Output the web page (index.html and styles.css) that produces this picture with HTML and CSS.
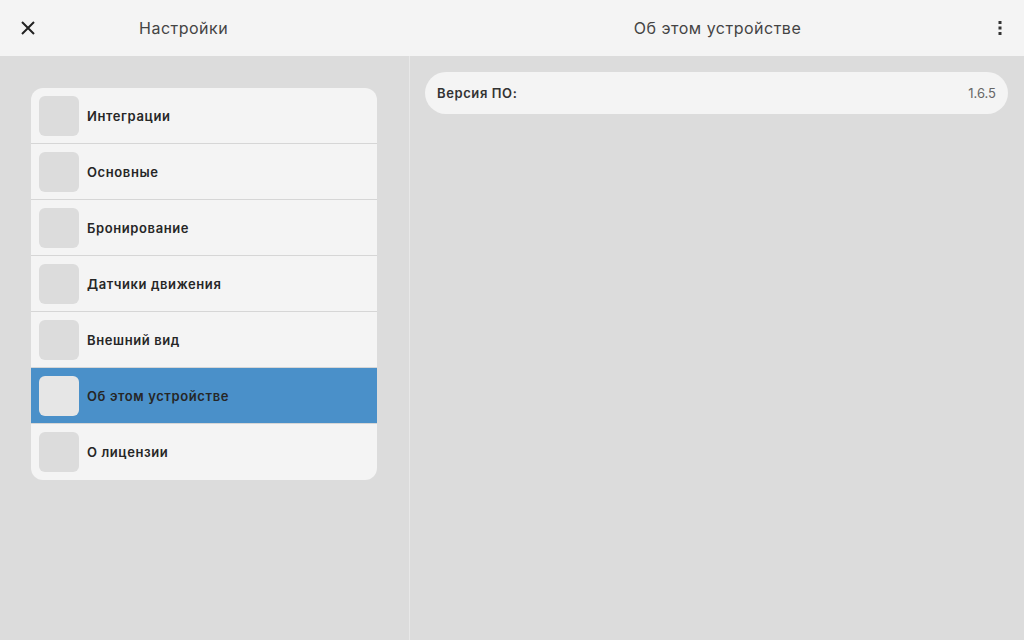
FILE: index.html
```html
<!DOCTYPE html>
<html lang="ru">
<head>
<meta charset="utf-8">
<link rel="stylesheet" href="styles.css">
</head>
<body>
<div class="app">
  <header class="topbar">
    <div class="top-left">
      <button class="icon-btn close" aria-label="close">
        <svg width="16" height="16" viewBox="0 0 16 16"><path d="M2 2L14 14M14 2L2 14" stroke="#222" stroke-width="2" fill="none"/></svg>
      </button>
      <div class="title left-title">Настройки</div>
    </div>
    <div class="top-right">
      <div class="title right-title">Об этом устройстве</div>
      <button class="icon-btn kebab" aria-label="menu">
        <svg width="4" height="16" viewBox="0 0 4 16"><rect x="0.5" y="1" width="3" height="3" fill="#333"/><rect x="0.5" y="6.5" width="3" height="3" fill="#333"/><rect x="0.5" y="12" width="3" height="3" fill="#333"/></svg>
      </button>
    </div>
  </header>
  <main class="content">
    <aside class="sidebar">
      <ul class="menu">
        <li class="item"><span class="ico"></span><span class="label">Интеграции</span></li>
        <li class="item"><span class="ico"></span><span class="label">Основные</span></li>
        <li class="item"><span class="ico"></span><span class="label">Бронирование</span></li>
        <li class="item"><span class="ico"></span><span class="label">Датчики движения</span></li>
        <li class="item"><span class="ico"></span><span class="label">Внешний вид</span></li>
        <li class="item active"><span class="ico"></span><span class="label">Об этом устройстве</span></li>
        <li class="item"><span class="ico"></span><span class="label">О лицензии</span></li>
      </ul>
    </aside>
    <section class="detail">
      <div class="row-card">
        <span class="key">Версия ПО:</span>
        <span class="value">1.6.5</span>
      </div>
    </section>
  </main>
</div>
</body>
</html>
```

FILE: styles.css
```css
* { box-sizing: border-box; }
html, body { margin: 0; padding: 0; }
body {
  width: 1024px;
  height: 640px;
  overflow: hidden;
  font-family: "Inter", "Open Sans", sans-serif;
  background: #dcdcdc;
  color: #222;
}
.app { display: flex; flex-direction: column; height: 640px; }
.topbar {
  height: 56px;
  background: #f4f4f4;
  display: flex;
  flex-shrink: 0;
}
.top-left {
  width: 409px;
  display: flex;
  align-items: center;
  padding-left: 20px;
}
.icon-btn {
  background: none;
  border: 0;
  padding: 0;
  display: flex;
  align-items: center;
  justify-content: center;
  cursor: pointer;
}
.close { width: 16px; height: 16px; margin-right: 103px; }
.title {
  font-size: 16px;
  font-weight: 400;
  color: #444;
  letter-spacing: 0.5px;
}
.top-right {
  flex: 1;
  display: flex;
  align-items: center;
  padding-right: 22px;
}
.right-title { flex: 1; text-align: center; padding-left: 28px; }
.kebab { width: 4px; height: 16px; }

.content { flex: 1; display: flex; }
.sidebar {
  width: 410px;
  border-right: 1px solid #e8e8e8;
  padding: 32px 32px 0 31px;
}
.menu {
  list-style: none;
  margin: 0;
  padding: 0;
  background: #f4f4f4;
  border-radius: 12px;
  overflow: hidden;
  width: 346px;
}
.item {
  height: 56px;
  display: flex;
  align-items: center;
  padding-left: 8px;
  border-bottom: 1px solid #d6d6d6;
}
.item:last-child { border-bottom: 0; }
.item.active { background: #4a90c9; }
.ico {
  width: 40px;
  height: 40px;
  border-radius: 6px;
  background: #dcdcdc;
  margin-right: 8px;
  flex-shrink: 0;
}
.item.active .ico { background: #e6e6e6; }
.label {
  font-size: 13px;
  font-weight: 600;
  color: #262626;
  letter-spacing: 0.6px;
}
.detail { flex: 1; padding: 16px 16px 0 15px; }
.row-card {
  height: 42px;
  background: #f4f4f4;
  border-radius: 21px;
  display: flex;
  align-items: center;
  justify-content: space-between;
  padding: 0 12px;
}
.key { font-size: 13px; font-weight: 600; color: #333; letter-spacing: 0.6px; }
.value { font-size: 13px; color: #666; }
```
